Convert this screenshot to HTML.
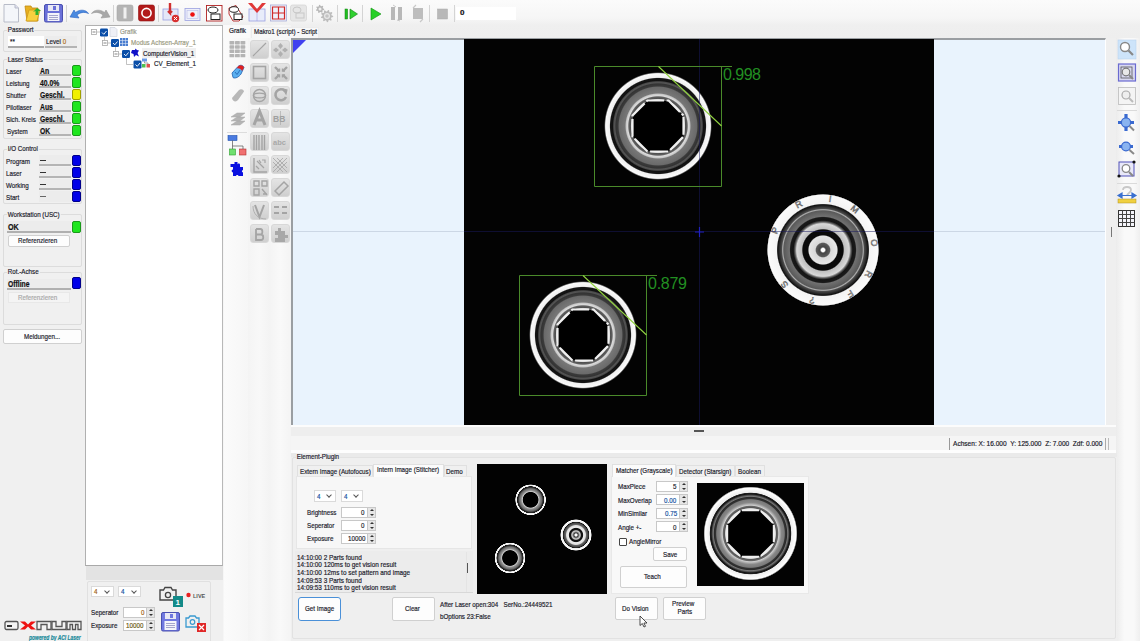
<!DOCTYPE html>
<html><head><meta charset="utf-8">
<style>
*{box-sizing:border-box}
html,body{margin:0;padding:0}
body{width:1140px;height:641px;overflow:hidden;position:relative;background:#f0f0f0;font-family:"Liberation Sans",sans-serif;color:#1c1c2c}
.a{position:absolute}
.t{position:absolute;white-space:nowrap;font-size:8px;line-height:8px;transform-origin:0 0;transform:scaleX(.78);-webkit-text-stroke:.2px currentColor}
.b{font-weight:bold;color:#111;font-size:8.5px;transform:scaleX(.8)}
#toolbar{left:0;top:0;width:1140px;height:38px;background:linear-gradient(#fbfbfb,#f6f6f6 18px,#efefef 25px,#eeeeee 37px)}
.sep{position:absolute;top:4px;width:1px;height:18px;background:#d6d6d6;border-right:1px solid #fff}
#tree{left:85px;top:25px;width:138px;height:541px;background:#fff;border:1px solid #b0b0b0;border-right:1px solid #b8b8b8;border-bottom:1px solid #a9a9a9}
#treebar{left:86px;top:566px;width:137px;height:14px;background:#e3e3e3}
#pal{left:223px;top:25px;width:68px;height:616px;background:#f6f6f6}
.pc{position:absolute;top:0;height:616px}
#canvas{left:291px;top:38px;width:815px;height:388px;background:#e9f3fd;border-top:2px solid #9a9ea2;border-left:2px solid #9a9ea2;border-right:1px solid #fff;border-bottom:1px solid #fff}
#img{left:464px;top:39px;width:470px;height:386px;background:#030303;overflow:hidden}
#rightbar{left:1116px;top:38px;width:24px;height:603px;background:linear-gradient(90deg,#ececec,#f9f9f9 35%,#f9f9f9 75%,#efefef)}
#status{left:291px;top:436px;width:825px;height:17px;background:#f5f5f5;border-bottom:3px solid #fdfdfd}
#plugin{left:291px;top:453px;width:826px;height:188px;background:#efefef;border-top:4px solid #eaeaea}
.grp{position:absolute;border:1px solid #dcdcdc;border-radius:2px}
.val{position:absolute;left:39px;width:32px;height:11px;background:#ececec;border-bottom:2px solid #b4b4b4}
.ind{position:absolute;left:72px;width:9px;height:11px;border-radius:2px;border:1px solid #1a9a1a;background:#1ee61e}
.ind.y{border-color:#a0a000;background:#f0f000}
.ind.bl{border-color:#00008a;background:#0000e8}
.btn{position:absolute;background:#fdfdfd;border:1px solid #d0d0d0;border-radius:2px}
.pb{position:absolute;width:19px;height:19px;border-radius:3px;background:linear-gradient(#e4e4e4,#cfcfcf);border:1px solid #d8d8d8}
.spin{position:absolute;height:11px;background:#fff;border:1px solid #c8c8c8}
.spin i{position:absolute;right:0;top:0;width:8px;height:100%;background:#e6e6e6;border-left:1px solid #c8c8c8}
.spin i:before{content:"";position:absolute;left:2px;top:1px;border:2px solid transparent;border-bottom:2px solid #333;border-top:0}
.spin i:after{content:"";position:absolute;left:2px;bottom:1px;border:2px solid transparent;border-top:2px solid #333;border-bottom:0}
.combo{position:absolute;height:12px;background:#fff;border:1px solid #dadada}
.combo:after{content:"";position:absolute;right:4px;top:2px;width:3px;height:3px;border-right:1px solid #555;border-bottom:1px solid #555;transform:rotate(45deg)}
.tab{position:absolute;height:12px;background:#f0f0f0;border:1px solid #e0e0e0;border-bottom:0}
.tab.sel{background:#fbfbfb;height:13px}
</style></head><body>
<!-- TOOLBAR -->
<div id="toolbar" class="a"></div>
<svg class="a" style="left:0;top:0" width="520" height="25" viewBox="0 0 520 25">
 <!-- new doc -->
 <path d="M4 4.5H15L18.5 8V22H4Z" fill="#f4f6fa" stroke="#b8bcc8"/>
 <path d="M15 4.5V8H18.5" fill="#dde" stroke="#b8bcc8"/>
 <!-- open folder -->
 <path d="M25 6H31L32 8H38V21H27Z" fill="#e8b020" stroke="#c08a10" stroke-width=".8"/>
 <path d="M29 10H40L37 21H26Z" fill="#f8d040" stroke="#d09a18" stroke-width=".8"/>
 <path d="M33 12L37 8L41 11H38.5V15H35.5V11Z" fill="#30b030"/>
 <!-- save -->
 <rect x="44.5" y="4.5" width="18" height="17.5" rx="1.5" fill="#6a70d8" stroke="#4a50b0"/>
 <rect x="48" y="5" width="11" height="6" fill="#e8e8f4"/>
 <rect x="53" y="6" width="3" height="4" fill="#6a70d8"/>
 <rect x="47.5" y="13" width="12" height="8" fill="#f4f4fa"/>
 <path d="M49 15.5H58M49 17.5H58M49 19.5H58" stroke="#9090c0" stroke-width=".8"/>
 <rect x="66" y="5" width="1" height="17" fill="#d4d4d4"/>
 <!-- undo -->
 <path d="M70 17L74 10L75.5 12.5C80 9 86 9.5 88.5 13.5C84 11.5 80 12.5 77 15L79 18Z" fill="#4a8ae0" stroke="#2a62c0" stroke-width=".6"/>
 <!-- redo -->
 <path d="M110 17L106 10L104.5 12.5C100 9 94 9.5 91.5 13.5C96 11.5 100 12.5 103 15L101 18Z" fill="#a8a8a8" stroke="#989898" stroke-width=".6"/>
 <rect x="113" y="5" width="1" height="17" fill="#d4d4d4"/>
 <!-- I button -->
 <rect x="117" y="5" width="16" height="16" rx="2" fill="#b4b4b4" stroke="#a8a8a8" stroke-width=".6"/>
 <rect x="123.5" y="7.5" width="3" height="11" fill="#f0f0f0"/>
 <!-- O button -->
 <rect x="138.5" y="5" width="16" height="16" rx="2" fill="#b21a1a" stroke="#901010" stroke-width=".6"/>
 <circle cx="146.5" cy="13" r="4.6" fill="none" stroke="#fff" stroke-width="1.6"/>
 <rect x="158" y="5" width="1" height="17" fill="#d4d4d4"/>
 <!-- arrow-down x -->
 <rect x="163" y="9" width="15" height="11" fill="#e4e8f8" stroke="#9aa0e0" stroke-width=".8"/>
 <path d="M170 3V13L168 11M170 13L172 11" stroke="#d03030" stroke-width="2.4" fill="none"/>
 <circle cx="175.5" cy="18.5" r="3.7" fill="#d83030"/>
 <path d="M174 17L177 20M177 17L174 20" stroke="#fff" stroke-width="1"/>
 <!-- red dot frame -->
 <rect x="185" y="8.5" width="15" height="12" fill="#eef0fa" stroke="#9aa0e0" stroke-width=".8"/>
 <rect x="187" y="10.5" width="11" height="8" fill="none" stroke="#b8bce8" stroke-width=".6"/>
 <circle cx="192.5" cy="14.5" r="2.3" fill="#ee1010"/>
 <!-- ellipse rect -->
 <rect x="206.5" y="5.5" width="15.5" height="15.5" fill="#fff" stroke="#b02020" stroke-width=".9"/>
 <ellipse cx="213" cy="10" rx="5" ry="3" fill="#fff" stroke="#222" stroke-width="1"/>
 <rect x="211" y="14" width="9" height="5.5" fill="#fff" stroke="#222" stroke-width="1"/>
 <!-- skew ellipse -->
 <path d="M229 8L236 5.5L243 17L239 21H233L229 14Z" fill="#fff" stroke="#b02020" stroke-width=".9"/>
 <ellipse cx="234" cy="9.5" rx="4.5" ry="2.8" fill="#fff" stroke="#222" stroke-width="1"/>
 <rect x="234" y="14" width="8" height="5.5" fill="#fff" stroke="#222" stroke-width="1"/>
 <!-- V arrows -->
 <rect x="249" y="9" width="16" height="12" fill="#e8ecfa" stroke="#9aa0e0" stroke-width=".8"/>
 <path d="M257 9V21" stroke="#9aa0e0" stroke-width=".6"/>
 <path d="M248 3L257 13L266 3L262 3L257 9L252 3Z" fill="#e03838"/>
 <!-- grid -->
 <rect x="270.5" y="5" width="16" height="16" fill="#eef0fa" stroke="#a8acd8" stroke-width=".8"/>
 <path d="M272.5 7H284.5V19H272.5ZM278.5 7V19M272.5 13H284.5" fill="none" stroke="#d02828" stroke-width="1.2"/>
 <!-- disabled -->
 <rect x="290.5" y="5" width="16" height="16" rx="2" fill="#e6e6e6" stroke="#d6d6d6" stroke-width=".8"/>
 <ellipse cx="297" cy="10" rx="4" ry="3" fill="none" stroke="#c8c8c8"/>
 <rect x="296" y="13" width="8" height="5" fill="none" stroke="#c8c8c8"/>
 <rect x="312" y="5" width="1" height="17" fill="#d4d4d4"/>
 <!-- gears -->
 <path d="M324.20 9.00L324.09 9.93L322.70 10.30L322.35 10.87L322.62 12.28L321.82 12.78L320.67 11.92L320.00 12.00L319.07 13.09L318.18 12.78L318.13 11.35L317.65 10.87L316.22 10.82L315.91 9.93L317.00 9.00L317.08 8.33L316.22 7.18L316.72 6.38L318.13 6.65L318.70 6.30L319.07 4.91L320.00 4.80L320.67 6.08L321.30 6.30L322.62 5.72L323.28 6.38L322.70 7.70L322.92 8.33Z" fill="#b8b8b8"/><circle cx="320" cy="9" r="1.5" fill="#f0f0f0"/>
 <path d="M333.20 16.00L333.11 17.08L331.32 17.57L330.98 18.30L331.75 19.99L330.99 20.75L329.30 19.98L328.57 20.32L328.08 22.11L327.00 22.20L326.20 20.53L325.43 20.32L323.90 21.37L323.01 20.75L323.48 18.96L323.02 18.30L321.17 18.12L320.89 17.08L322.40 16.00L322.47 15.20L321.17 13.88L321.63 12.90L323.48 13.04L324.04 12.48L323.90 10.63L324.88 10.17L326.20 11.47L327.00 11.40L328.08 9.89L329.12 10.17L329.30 12.02L329.96 12.48L331.75 12.01L332.37 12.90L331.32 14.43L331.53 15.20Z" fill="#bdbdbd"/><circle cx="327" cy="16" r="3" fill="#e8e8e8"/><circle cx="327" cy="16" r="1.8" fill="#c4c4c4"/>
 <rect x="337" y="5" width="1" height="17" fill="#d4d4d4"/>
 <!-- step -->
 <rect x="345" y="9" width="2.6" height="10" fill="#20c020" stroke="#108010" stroke-width=".5"/>
 <path d="M350 9L357.5 14L350 19Z" fill="#30d030" stroke="#108010" stroke-width=".6"/>
 <rect x="362" y="5" width="1" height="17" fill="#d4d4d4"/>
 <!-- play -->
 <path d="M371 8L381 14L371 20Z" fill="#28d028" stroke="#109010" stroke-width=".6"/>
 <!-- pause -->
 <rect x="391" y="7" width="4" height="13" fill="#b8b8b8"/>
 <rect x="398" y="7" width="4" height="13" fill="#b8b8b8"/>
 <path d="M393 5L396 7M400 21L397 20" stroke="#c8c8c8"/>
 <!-- stop/arrows -->
 <rect x="413" y="8" width="10" height="11" fill="#bdbdbd"/>
 <path d="M413 8L416 5M423 19L420 22" stroke="#c8c8c8" stroke-width="1.2"/>
 <rect x="429" y="5" width="1" height="17" fill="#d4d4d4"/>
 <rect x="437.5" y="9" width="10" height="10" fill="#b8b8b8" stroke="#aaa" stroke-width=".5"/>
 <rect x="454" y="5" width="1" height="17" fill="#d4d4d4"/>
 <rect x="456" y="7" width="60" height="13" fill="#fff"/>
</svg>
<div class="t b" style="left:460px;top:9px;font-size:8px;transform:none">0</div>

<!-- LEFT PANEL -->
<div id="left" class="a" style="left:0;top:25px;width:86px;height:616px;background:#f0f0f0"></div>
<!-- Passwort -->
<div class="grp" style="left:3px;top:30px;width:79px;height:22px"></div>
<div class="t" style="left:7px;top:26px;padding:0 1px;background:#f0f0f0">Passwort</div>
<div class="a" style="left:8px;top:36px;width:36px;height:12px;background:#fff;border-bottom:2px solid #a8a8a8"></div>
<div class="t" style="left:10px;top:38px">**</div>
<div class="a" style="left:45px;top:36px;width:32px;height:12px;background:#ececec;border-bottom:2px solid #b4b4b4"></div>
<div class="t" style="left:46px;top:38px">Level <span style="color:#b07020">0</span></div>
<!-- Laser Status -->
<div class="grp" style="left:3px;top:59px;width:79px;height:80px"></div>
<div class="t" style="left:7px;top:56px;padding:0 1px;background:#f0f0f0">Laser Status</div>
<div class="t" style="left:6px;top:68px">Laser</div><div class="val" style="top:65px"></div><div class="t b" style="left:40px;top:67px">An</div><div class="ind" style="top:65px"></div>
<div class="t" style="left:6px;top:80px">Leistung</div><div class="val" style="top:77px"></div><div class="t b" style="left:40px;top:79px">40.0%</div><div class="ind" style="top:77px"></div>
<div class="t" style="left:6px;top:92px">Shutter</div><div class="val" style="top:89px"></div><div class="t b" style="left:40px;top:91px">Geschl.</div><div class="ind y" style="top:89px"></div>
<div class="t" style="left:6px;top:104px">Pilotlaser</div><div class="val" style="top:101px"></div><div class="t b" style="left:40px;top:103px">Aus</div><div class="ind" style="top:101px"></div>
<div class="t" style="left:6px;top:116px">Sich. Kreis</div><div class="val" style="top:113px"></div><div class="t b" style="left:40px;top:115px">Geschl.</div><div class="ind" style="top:113px"></div>
<div class="t" style="left:7px;top:128px">System</div><div class="val" style="top:125px"></div><div class="t b" style="left:40px;top:127px">OK</div><div class="ind" style="top:125px"></div>
<!-- I/O Control -->
<div class="grp" style="left:3px;top:149px;width:79px;height:55px"></div>
<div class="t" style="left:7px;top:145px;padding:0 1px;background:#f0f0f0">I/O Control</div>
<div class="t" style="left:6px;top:158px">Program</div><div class="val" style="top:155px"></div><div class="a" style="left:40px;top:160px;width:6px;height:1px;background:#333"></div><div class="ind bl" style="top:155px"></div>
<div class="t" style="left:6px;top:170px">Laser</div><div class="val" style="top:167px"></div><div class="a" style="left:40px;top:172px;width:6px;height:1px;background:#333"></div><div class="ind bl" style="top:167px"></div>
<div class="t" style="left:6px;top:182px">Working</div><div class="val" style="top:179px"></div><div class="a" style="left:40px;top:184px;width:6px;height:1px;background:#333"></div><div class="ind bl" style="top:179px"></div>
<div class="t" style="left:6px;top:194px">Start</div><div class="val" style="top:191px;border-bottom:0"></div><div class="a" style="left:40px;top:196px;width:6px;height:1px;background:#666"></div><div class="ind bl" style="top:191px"></div>
<!-- Workstation -->
<div class="grp" style="left:3px;top:214px;width:79px;height:53px"></div>
<div class="t" style="left:7px;top:211px;padding:0 1px;background:#f0f0f0">Workstation (USC)</div>
<div class="a" style="left:7px;top:221px;width:64px;height:12px;background:#ececec;border-bottom:2px solid #b0b0b0"></div>
<div class="t b" style="left:8px;top:223px;font-size:8.5px;transform:scaleX(.85)">OK</div>
<div class="ind" style="top:221px;height:12px"></div>
<div class="btn" style="left:8px;top:235px;width:62px;height:12px"></div>
<div class="t" style="left:18px;top:237px">Referenzieren</div>
<!-- Rot.-Achse -->
<div class="grp" style="left:3px;top:272px;width:79px;height:53px"></div>
<div class="t" style="left:7px;top:268px;padding:0 1px;background:#f0f0f0">Rot.-Achse</div>
<div class="a" style="left:7px;top:279px;width:64px;height:11px;background:#ececec;border-bottom:2px solid #b0b0b0"></div>
<div class="t b" style="left:8px;top:280px;font-size:8.5px;transform:scaleX(.8)">Offline</div>
<div class="ind bl" style="top:277px;height:12px"></div>
<div class="a" style="left:8px;top:292px;width:62px;height:11px;background:#f4f4f4;border:1px solid #e8e8e8"></div>
<div class="t" style="left:18px;top:294px;color:#a8a8a8">Referenzieren</div>
<!-- Meldungen -->
<div class="btn" style="left:3px;top:329px;width:79px;height:15px"></div>
<div class="t" style="left:24px;top:333px">Meldungen...</div>
<!-- logo -->
<svg class="a" style="left:4px;top:620px" width="78" height="11" viewBox="0 0 78 11">
 <g fill="#f4f4f4" stroke="#555" stroke-width="1.3">
  <rect x="1" y="1.5" width="13" height="8" rx="1.5"/>
  <path d="M33 9.5V1.5H47V9.5H43V4.5H37V9.5Z"/>
  <path d="M48 1.5H52V6.5H58V1.5H62V9.5H48Z"/>
  <path d="M63 9.5V1.5H77V9.5H74V4.5H71.5V9.5H68.5V4.5H66V9.5Z"/>
 </g>
 <rect x="3" y="5" width="5" height="2" fill="#333"/>
 <path d="M16 1.5H21L24 4.5L27 1.5H32L27 5.5L32 9.5H27L24 6.5L21 9.5H16L21 5.5Z" fill="#ee1111"/>
</svg>
<div class="t" style="left:29px;top:634px;font-size:6.5px;font-style:italic;font-weight:bold;color:#1a8a9a;transform:scaleX(.76)">powered by ACI Laser</div>

<!-- TREE -->
<div id="tree" class="a"></div>
<div id="treebar" class="a"></div>
<svg class="a" style="left:86px;top:25px" width="136" height="50" viewBox="86 25 136 50">
 <g stroke="#a8a8a8" stroke-width=".7" fill="none">
  <path d="M96.5 32H100M104.5 36.5V40.5M107.5 43H111M115.5 47V51.5M118.5 54H122M126.5 58V64.5H133"/>
 </g>
 <g fill="#fff" stroke="#a8a8a8" stroke-width=".8">
  <rect x="91.5" y="29.5" width="5" height="5"/><rect x="102.5" y="40.5" width="5" height="5"/><rect x="113.5" y="51.5" width="5" height="5"/>
 </g>
 <path d="M92.5 32H95.5M103.5 43H106.5M114.5 54H117.5" stroke="#555" stroke-width=".7"/>
 <g fill="#0a4ea8">
  <rect x="100" y="28.5" width="8" height="8" rx="1.2"/><rect x="111" y="39" width="8" height="8" rx="1.2"/><rect x="122" y="50" width="8" height="8" rx="1.2"/><rect x="133.5" y="60.5" width="8" height="8" rx="1.2"/>
 </g>
 <path d="M102 32.5L103.8 34.3L106.5 31M113 43L114.8 44.8L117.5 41.5M124 54L125.8 55.8L128.5 52.5M135.5 64.5L137.3 66.3L140 63" stroke="#fff" stroke-width=".9" fill="none"/>
 <!-- doc icon -->
 <path d="M110 27.5H115L117 29.5V36.5H110Z" fill="#eef0f6" stroke="#c8ccd8" stroke-width=".6"/>
 <!-- grid icon -->
 <g fill="#4a7ed0"><rect x="120.0" y="38.0" width="2.4" height="2.4"/><rect x="120.0" y="40.8" width="2.4" height="2.4"/><rect x="120.0" y="43.6" width="2.4" height="2.4"/><rect x="122.8" y="38.0" width="2.4" height="2.4"/><rect x="122.8" y="40.8" width="2.4" height="2.4"/><rect x="122.8" y="43.6" width="2.4" height="2.4"/><rect x="125.6" y="38.0" width="2.4" height="2.4"/><rect x="125.6" y="40.8" width="2.4" height="2.4"/><rect x="125.6" y="43.6" width="2.4" height="2.4"/></g>
 <!-- puzzle small -->
 <path d="M132 50L135 50L135.5 48.5L137 50L139 50.5L137.5 53L139 56.5L136 55L134 57L133.5 54L131 53Z" fill="#1010c8"/>
 <!-- CV icon -->
 <rect x="142" y="58.5" width="5" height="3" fill="#6a9ae8"/>
 <rect x="142" y="64" width="3.5" height="3.5" fill="#50c050"/><rect x="146.5" y="64" width="3.5" height="3.5" fill="#e05050"/>
 <path d="M144.5 61.5V63M144.5 63H148V64" stroke="#555" stroke-width=".5" fill="none"/>
</svg>
<div class="a" style="left:142px;top:48px;width:54px;height:10px;background:#f0f0f0"></div>
<div class="t" style="left:120px;top:28px;color:#9a9a8a">Grafik</div>
<div class="t" style="left:131px;top:39px;color:#9a9a80">Modus Achsen-Array_1</div>
<div class="t" style="left:143px;top:50px;color:#1a1a2a">ComputerVision_1</div>
<div class="t" style="left:154px;top:60px;color:#1a1a2a">CV_Element_1</div>

<!-- bottom controls under tree -->
<div class="grp" style="left:87px;top:581px;width:124px;height:62px;border-color:#e0e0e0"></div>
<div class="combo" style="left:91px;top:586px;width:23px;height:11px"></div><div class="t" style="left:94px;top:588px;color:#a06010">4</div>
<div class="combo" style="left:118px;top:586px;width:23px;height:11px"></div><div class="t" style="left:121px;top:588px;color:#1050a0">4</div>
<div class="t" style="left:91px;top:609px">Seperator</div>
<div class="spin" style="left:123px;top:607px;width:32px"><i></i></div><div class="t" style="left:141px;top:609px;color:#a06010">0</div>
<div class="t" style="left:91px;top:622px">Exposure</div>
<div class="spin" style="left:123px;top:620px;width:32px"><i></i></div><div class="t" style="left:126px;top:622px;color:#6a5a10">10000</div>
<svg class="a" style="left:158px;top:584px" width="52" height="50" viewBox="158 584 52 50">
 <path d="M160 590H163.5L165 587.5H171L172.5 590H176V600H160Z" fill="none" stroke="#444" stroke-width="1.4"/>
 <circle cx="168" cy="595" r="2.6" fill="none" stroke="#444" stroke-width="1.3"/>
 <rect x="173" y="596" width="10" height="11" fill="#138a88"/>
 <text x="175.5" y="605" font-family="Liberation Sans" font-size="8" font-weight="bold" fill="#fff">1</text>
 <circle cx="188.5" cy="595" r="2.2" fill="#e82020"/>
 <text x="193" y="597.5" font-family="Liberation Sans" font-size="5.5" font-weight="bold" fill="#555">LIVE</text>
 <rect x="161.5" y="612.5" width="18" height="18.5" rx="1.5" fill="#7078e0" stroke="#4a50b0"/>
 <rect x="165" y="613" width="11" height="6" fill="#e8e8f4"/>
 <rect x="170" y="614" width="3" height="4" fill="#7078e0"/>
 <rect x="164.5" y="621" width="12" height="9" fill="#f4f4fa"/>
 <path d="M166 623.5H175M166 625.5H175M166 627.5H175" stroke="#9090c0" stroke-width=".8"/>
 <path d="M186 618H188.5L190 616H195L196.5 618H199V627H186Z" fill="none" stroke="#3a9ad0" stroke-width="1.3"/>
 <circle cx="192.5" cy="622" r="2.3" fill="none" stroke="#3a9ad0" stroke-width="1.2"/>
 <rect x="197" y="623" width="9" height="9" fill="#e02828"/>
 <path d="M199 625L204 630M204 625L199 630" stroke="#fff" stroke-width="1.2"/>
</svg>

<!-- PALETTE -->
<div id="pal" class="a">
 <div class="pc" style="left:1px;width:24px;background:linear-gradient(90deg,#fbfbfb,#f6f6f6)"></div>
 <div class="pc" style="left:25px;width:22px;background:linear-gradient(90deg,#f4f4f4,#f8f8f8,#f3f3f3)"></div>
 <div class="pc" style="left:47px;width:21px;background:linear-gradient(90deg,#f4f4f4,#f9f9f9,#f4f4f4)"></div>
</div>
<!-- tabs -->
<div class="a" style="left:223px;top:25px;width:27px;height:13px;background:#fafafa"></div>
<div class="t" style="left:229px;top:27px;transform:scaleX(.8)">Grafik</div>
<div class="a" style="left:251px;top:27px;width:68px;height:11px;background:#f7f7f7;border:1px solid #ececec;border-bottom:0"></div>
<div class="t" style="left:254px;top:28px;transform:scaleX(.78)">Makro1 (script) - Script</div>
<!-- palette buttons -->
<div class="a" style="left:250px;top:40px">
 <div class="pb" style="left:0;top:0"></div><div class="pb" style="left:21px;top:0"></div>
 <div class="pb" style="left:0;top:23px"></div><div class="pb" style="left:21px;top:23px"></div>
 <div class="pb" style="left:0;top:46px"></div><div class="pb" style="left:21px;top:46px"></div>
 <div class="pb" style="left:0;top:69px"></div><div class="pb" style="left:21px;top:69px"></div>
 <div class="pb" style="left:0;top:92px"></div><div class="pb" style="left:21px;top:92px"></div>
 <div class="pb" style="left:0;top:115px"></div><div class="pb" style="left:21px;top:115px"></div>
 <div class="pb" style="left:0;top:138px"></div><div class="pb" style="left:21px;top:138px"></div>
 <div class="pb" style="left:0;top:161px"></div><div class="pb" style="left:21px;top:161px"></div>
 <div class="pb" style="left:0;top:184px"></div><div class="pb" style="left:21px;top:184px"></div>
</div>
<svg class="a" style="left:223px;top:38px" width="68" height="210" viewBox="223 38 68 210">
 <g fill="none" stroke="#a4a4a4" stroke-width="1.1">
  <!-- col1 grid -->
  <g fill="#b4b4b4" stroke="none"><rect x="229.5" y="41.0" width="4.8" height="3.4" rx=".6"/><rect x="229.5" y="45.3" width="4.8" height="3.4" rx=".6"/><rect x="229.5" y="49.6" width="4.8" height="3.4" rx=".6"/><rect x="229.5" y="53.9" width="4.8" height="3.4" rx=".6"/><rect x="235.0" y="41.0" width="4.8" height="3.4" rx=".6"/><rect x="235.0" y="45.3" width="4.8" height="3.4" rx=".6"/><rect x="235.0" y="49.6" width="4.8" height="3.4" rx=".6"/><rect x="235.0" y="53.9" width="4.8" height="3.4" rx=".6"/><rect x="240.5" y="41.0" width="4.8" height="3.4" rx=".6"/><rect x="240.5" y="45.3" width="4.8" height="3.4" rx=".6"/><rect x="240.5" y="49.6" width="4.8" height="3.4" rx=".6"/><rect x="240.5" y="53.9" width="4.8" height="3.4" rx=".6"/></g>
  <!-- line -->
  <path d="M253 56L266 43"/>
  <!-- rect -->
  <rect x="253.5" y="66.5" width="12" height="12" stroke-width="1.6"/>
  <!-- sphere -->
  <ellipse cx="259.5" cy="95.5" rx="6" ry="6" stroke-width="1.5"/><ellipse cx="259.5" cy="95.5" rx="6" ry="2.4" stroke-width="1.3"/>
  <!-- A -->
  <path d="M254 125L259.5 111L265 125M256 120H263" stroke-width="3"/>
  <!-- barcode -->
  <path d="M254 135V150M256.5 135V150M259 135V150M262 135V150M264.5 135V150" stroke-width="1.4"/>
  <!-- datamatrix -->
  <path d="M254 158V172H267" stroke-width="1.4"/>
  <path d="M257 161L264 168M259 160L261 163M256 166L259 169M262 160H265V163" stroke-width="1.2"/>
  <!-- qr -->
  <path d="M254 181H259V186H254ZM262 181H267V186H262ZM254 189H259V195H254ZM262 189L267 195M263 194H267" stroke-width="1.4"/>
  <!-- V -->
  <path d="M255 205L259.5 217L264 205" stroke-width="2"/>
  <path d="M253 206C253 214 258 219 266 219" stroke-width=".8"/>
  <!-- B -->
  <path d="M256 229V240H261C264 240 264 234.5 261 234.5H256M256 229H260.5C263 229 263 234.5 260.5 234.5" stroke-width="1.8"/>
  <!-- move -->
  <path d="M280.5 43L283 46L280.5 49L278 46ZM280.5 51L283 54L280.5 57L278 54ZM276 47.5L279 50L276 52.5L273 50ZM285 47.5L288 50L285 52.5L282 50Z" fill="#b0b0b0" stroke="none"/>
  <!-- shrink -->
  <path d="M275 67L279 71M287 67L283 71M275 79L279 75M287 79L283 75" stroke-width="2.4"/><path d="M277 71H279.5V68.5M285 71H282.5V68.5M277 75H279.5V77.5M285 75H282.5V77.5" stroke-width="1.4"/>
  <!-- rotate -->
  <path d="M285 91A5.5 5.5 0 1 0 286 97" stroke-width="2.6"/>
  <path d="M283 89L287 90L286 94Z" fill="#a4a4a4"/>
  <!-- BB -->
  <text x="273" y="122" font-family="Liberation Sans" font-size="8.5" font-weight="bold" fill="#a0a0a0" stroke="none">BB</text>
  <path d="M280.5 111V125" stroke-width=".6"/>
  <!-- abc -->
  <text x="273" y="145" font-family="Liberation Sans" font-size="7.5" font-weight="bold" fill="#a8a8a8" stroke="none">abc</text>
  <!-- mesh -->
  <path d="M273 158L287 172M277 158L287 168M273 162L283 172M287 158L273 172M283 158L273 168M287 162L277 172" stroke-width=".8"/>
  <!-- bandage -->
  <path d="M275 191L284 182L288 186L279 195Z" stroke-width="1.5"/>
  <!-- arrows -->
  <path d="M274 207H279M282 207H287M274 213H279M282 213H287" stroke-width="1.8"/>
  <!-- puzzle -->
  <path d="M275 231H278V228H281V231H285V235H288V238H285V242H275V238H278V235H275Z" fill="#a8a8a8" stroke="none"/>
 </g>
 <!-- col1 colored -->
 <path d="M232 73L238 66.5C240 64.5 243 65 244 67.5L241 74C239 77 235 79 233 77.5Z" fill="#5ab0f0" stroke="#2060b0" stroke-width=".8"/>
 <path d="M238 66.5C240 64.5 243 65 244 67.5L242 71C241 69 239 68 236.5 68.5Z" fill="#e02020"/>
 <path d="M235 72L237 74.5L240 70" stroke="#2060b0" stroke-width=".8" fill="none"/>
 <path d="M232 98L239 90C240.5 88.5 243.5 89 244 91.5L238 100C236 102.5 232.5 101.5 232 98Z" fill="#b8b8b8"/>
 <path d="M231 117L237 113H245L240 117ZM231 121L237 117H245L240 121ZM231 125L237 121H245L240 125Z" fill="#b4b4b4" stroke="#a8a8a8" stroke-width=".5"/>
 <rect x="227" y="132" width="20" height="1" fill="#dcdcdc"/>
 <rect x="228" y="135.5" width="9" height="5" fill="#4a7ae0" stroke="#2050b0" stroke-width=".6"/>
 <rect x="229.5" y="149" width="6" height="6" fill="#70e070" stroke="#30a030" stroke-width=".6"/>
 <rect x="239.5" y="149" width="6.5" height="6" fill="#f07070" stroke="#b03030" stroke-width=".6"/>
 <path d="M232.5 140.5V146H243V149M232.5 146V149" stroke="#555" stroke-width=".7" fill="none"/>
 <path d="M234.5 162H237.5V164.5C237.5 163 240 163 240 164.5V167H243V170C241.5 170 241.5 172.5 243 172.5V176H238.5C238.5 174.5 236 174.5 236 176H233V172.5C231.5 172.5 231 169.5 233 169.5V167H230.5V164H234.5Z" fill="#0a10e0"/>
</svg>

<!-- CANVAS -->
<div id="canvas" class="a"></div>
<svg class="a" style="left:293px;top:40px" width="14" height="14"><path d="M0 0H13L0 13Z" fill="#4040f0"/></svg>
<div class="a" style="left:293px;top:231px;width:812px;height:1px;background:#ccd7e5"></div>
<div id="img" class="a">
<svg width="470" height="386" viewBox="464 39 470 386" style="display:block">
 <defs>
  <radialGradient id="ga" gradientUnits="userSpaceOnUse" cx="0" cy="0" r="54"><stop offset="0" stop-color="#000"/><stop offset="0.44" stop-color="#000"/><stop offset="0.455" stop-color="#eaeaea"/><stop offset="0.49" stop-color="#d8d8d8"/><stop offset="0.51" stop-color="#505050"/><stop offset="0.54" stop-color="#606060"/><stop offset="0.56" stop-color="#dcdcdc"/><stop offset="0.59" stop-color="#c8c8c8"/><stop offset="0.61" stop-color="#777"/><stop offset="0.72" stop-color="#6a6a6a"/><stop offset="0.74" stop-color="#3a3a3a"/><stop offset="0.78" stop-color="#333"/><stop offset="0.8" stop-color="#555"/><stop offset="0.82" stop-color="#4a4a4a"/><stop offset="0.84" stop-color="#111"/><stop offset="0.88" stop-color="#151515"/><stop offset="0.9" stop-color="#f0f0f0"/><stop offset="0.97" stop-color="#fafafa"/><stop offset="0.99" stop-color="#333"/><stop offset="1" stop-color="#000"/></radialGradient>
  <radialGradient id="gb" gradientUnits="userSpaceOnUse" cx="0" cy="0" r="56"><stop offset="0" stop-color="#fff"/><stop offset="0.03" stop-color="#fff"/><stop offset="0.055" stop-color="#444"/><stop offset="0.12" stop-color="#5a5a5a"/><stop offset="0.14" stop-color="#d8d8d8"/><stop offset="0.25" stop-color="#e6e6e6"/><stop offset="0.27" stop-color="#0a0a0a"/><stop offset="0.36" stop-color="#0a0a0a"/><stop offset="0.38" stop-color="#c0c0c0"/><stop offset="0.47" stop-color="#d8d8d8"/><stop offset="0.5" stop-color="#606060"/><stop offset="0.53" stop-color="#151515"/><stop offset="0.58" stop-color="#1a1a1a"/><stop offset="0.6" stop-color="#707070"/><stop offset="0.7" stop-color="#5a5a5a"/><stop offset="0.72" stop-color="#b0b0b0"/><stop offset="0.74" stop-color="#4a4a4a"/><stop offset="0.78" stop-color="#2a2a2a"/><stop offset="0.81" stop-color="#101010"/><stop offset="0.83" stop-color="#f4f4f4"/><stop offset="0.98" stop-color="#fafafa"/><stop offset="0.995" stop-color="#888"/><stop offset="1" stop-color="#000"/></radialGradient>
 </defs>
  <g transform="translate(658 126)"><circle r="54" fill="url(#ga)"/>
  <path d="M25.5 -10.56L25.5 10.56L10.56 25.5L-10.56 25.5L-25.5 10.56L-25.5 -10.56L-10.56 -25.5L10.56 -25.5Z" fill="#000" stroke="#f0f0f0" stroke-width="2.2" stroke-dasharray="18.16 2.5" stroke-dashoffset="-1.25"/></g>
 <g transform="translate(583 335)"><circle r="54" fill="url(#ga)"/>
  <path d="M25.5 -10.56L25.5 10.56L10.56 25.5L-10.56 25.5L-25.5 10.56L-25.5 -10.56L-10.56 -25.5L10.56 -25.5Z" fill="#000" stroke="#f0f0f0" stroke-width="2.2" stroke-dasharray="18.16 2.5" stroke-dashoffset="-1.25"/></g>
 <g transform="translate(823 250)"><circle r="56" fill="url(#gb)"/><circle r="1.5" fill="#fff"/><text x="0" y="0" transform="translate(-23.9 -45.0) rotate(-28)" font-family="Liberation Sans" font-size="9" text-anchor="middle" dominant-baseline="middle" fill="none" stroke="#666" stroke-width=".6">R</text><text x="0" y="0" transform="translate(7.1 -50.5) rotate(8)" font-family="Liberation Sans" font-size="9" text-anchor="middle" dominant-baseline="middle" fill="none" stroke="#666" stroke-width=".6">I</text><text x="0" y="0" transform="translate(31.4 -40.2) rotate(38)" font-family="Liberation Sans" font-size="9" text-anchor="middle" dominant-baseline="middle" fill="none" stroke="#666" stroke-width=".6">M</text><text x="0" y="0" transform="translate(50.5 -7.1) rotate(82)" font-family="Liberation Sans" font-size="9" text-anchor="middle" dominant-baseline="middle" fill="none" stroke="#666" stroke-width=".6">O</text><text x="0" y="0" transform="translate(45.0 23.9) rotate(118)" font-family="Liberation Sans" font-size="9" text-anchor="middle" dominant-baseline="middle" fill="none" stroke="#666" stroke-width=".6">R</text><text x="0" y="0" transform="translate(27.0 43.3) rotate(148)" font-family="Liberation Sans" font-size="9" text-anchor="middle" dominant-baseline="middle" fill="none" stroke="#666" stroke-width=".6">F</text><text x="0" y="0" transform="translate(-10.6 49.9) rotate(192)" font-family="Liberation Sans" font-size="9" text-anchor="middle" dominant-baseline="middle" fill="none" stroke="#666" stroke-width=".6">?</text><text x="0" y="0" transform="translate(-37.9 34.1) rotate(228)" font-family="Liberation Sans" font-size="9" text-anchor="middle" dominant-baseline="middle" fill="none" stroke="#666" stroke-width=".6">S</text><text x="0" y="0" transform="translate(-47.3 -19.1) rotate(-68)" font-family="Liberation Sans" font-size="9" text-anchor="middle" dominant-baseline="middle" fill="none" stroke="#666" stroke-width=".6">P</text></g>
 <path d="M464 231.5H934M699.5 39V425" stroke="#1a1a60" stroke-opacity=".5" stroke-width="1"/>
 <path d="M695 232H704M699.5 227V237" stroke="#2020c0" stroke-width="1.2"/>
 <g fill="none" stroke="#4a8a2a" stroke-width="1">
  <path d="M594.5 66.5H732M594.5 66.5V186.5H721.5V66.5"/>
  <path d="M519.5 275.5H657M519.5 275.5V395.5H646.5V275.5"/>
 </g>
 <path d="M658.5 66.5L721.5 126M583 275.5L646.5 335" stroke="#90d040" stroke-width="1.1"/>
 <text x="723" y="79.5" font-family="Liberation Sans" font-size="16" fill="#229022" textLength="38">0.998</text>
 <text x="648" y="289" font-family="Liberation Sans" font-size="16" fill="#229022" textLength="39">0.879</text>
</svg>
</div>

<!-- RIGHT BAR -->
<div id="rightbar" class="a"></div>
<div class="a" style="left:1106px;top:38px;width:10px;height:398px;background:#efefef"></div>
<div class="a" style="left:1111px;top:227px;width:1px;height:10px;background:#777"></div>
<svg class="a" style="left:1116px;top:36px" width="24" height="196" viewBox="1116 36 24 196">
 <!-- zoom 1 (selected) -->
 <rect x="1118" y="40" width="18" height="19" fill="#cde4fa" stroke="#b8d2ee" stroke-width=".6"/>
 <circle cx="1125" cy="47" r="4.5" fill="#fff" stroke="#888" stroke-width="1.4"/>
 <path d="M1128.5 50.5L1133 55" stroke="#888" stroke-width="2.2"/>
 <!-- zoom 2 -->
 <rect x="1118.5" y="64" width="17" height="17" fill="#d8d8f0" stroke="#6a6ad0" stroke-width="1.2"/>
 <rect x="1121" y="67" width="11" height="11" fill="none" stroke="#555" stroke-width=".8"/>
 <circle cx="1126" cy="72" r="3.8" fill="#e8e8e8" stroke="#777" stroke-width="1.2"/>
 <path d="M1129 75L1133 79" stroke="#888" stroke-width="2"/>
 <!-- zoom 3 disabled -->
 <rect x="1118.5" y="87.5" width="17" height="17" fill="#f4f4f4" stroke="#bbb" stroke-width=".8"/>
 <circle cx="1126" cy="95" r="4" fill="#eee" stroke="#aaa" stroke-width="1.2"/>
 <path d="M1129 98L1133 102" stroke="#bbb" stroke-width="2"/>
 <rect x="1117" y="110" width="20" height="1" fill="#dadada"/>
 <!-- zoom 4 -->
 <path d="M1126 114V131M1118 122.5H1134" stroke="#3a6ad0" stroke-width="3.2"/>
 <circle cx="1126" cy="122.5" r="4.6" fill="#8ab4f0" stroke="#3a6ad0" stroke-width="1.2"/>
 <path d="M1129.5 126L1134 130.5" stroke="#888" stroke-width="2"/>
 <!-- zoom 5 -->
 <path d="M1119 146.5H1133" stroke="#3a6ad0" stroke-width="3"/>
 <circle cx="1126" cy="146.5" r="4.4" fill="#8ab4f0" stroke="#3a6ad0" stroke-width="1.2"/>
 <path d="M1129.5 150L1134 154" stroke="#888" stroke-width="2"/>
 <!-- zoom 6 -->
 <rect x="1119" y="162" width="15" height="14" fill="#e8e8f8" stroke="#5050b8" stroke-width="1"/>
 <circle cx="1126" cy="168.5" r="3.8" fill="#fff" stroke="#888" stroke-width="1.3"/>
 <path d="M1129 172L1133 176" stroke="#888" stroke-width="2"/>
 <circle cx="1119" cy="176" r="1.6" fill="#111"/><circle cx="1134" cy="162" r="1.6" fill="#111"/>
 <rect x="1117" y="183" width="20" height="1" fill="#dadada"/>
 <!-- ? icon -->
 <path d="M1123 190C1123 186 1131 186 1131 190C1131 193 1127 193 1127 196" fill="none" stroke="#c8c8c8" stroke-width="1.8"/>
 <path d="M1118 195.5L1122 193V198ZM1136 195.5L1132 193V198ZM1122 195.5H1132" fill="#3a70d0" stroke="#3a70d0" stroke-width="1.2"/>
 <rect x="1118" y="199" width="18" height="4" fill="#f0d040" stroke="#b09020" stroke-width=".5"/>
 <!-- grid -->
 <rect x="1118.5" y="210.5" width="16" height="16" fill="#f4f4fa" stroke="#333"/>
 <path d="M1122.5 210.5V226.5M1126.5 210.5V226.5M1130.5 210.5V226.5M1118.5 214.5H1134.5M1118.5 218.5H1134.5M1118.5 222.5H1134.5" stroke="#444" stroke-width="1"/>
</svg>

<!-- SPLITTER / STATUS -->
<div class="a" style="left:291px;top:425px;width:825px;height:2px;background:#fcfcfc"></div>
<div class="a" style="left:291px;top:427px;width:825px;height:9px;background:#eeeeee"></div>
<div class="a" style="left:694px;top:430px;width:10px;height:2px;background:#555"></div>
<div id="status" class="a"></div>

<!-- PLUGIN -->
<div id="plugin" class="a"></div>
<div class="a" style="left:949px;top:438px;width:1px;height:12px;background:#999"></div>
<div class="t" style="left:953px;top:440px;font-size:8px;color:#1a1a2a;transform:scaleX(.82)">Achsen: X: 16.000&nbsp; Y: 125.000&nbsp; Z: 7.000&nbsp; Zdf: 0.000</div>
<div class="a" style="left:1105px;top:438px;width:1px;height:12px;background:#aaa"></div>
<div class="a" style="left:1108px;top:438px;width:1px;height:12px;background:#bbb"></div>

<div class="grp" style="left:292px;top:457px;width:824px;height:182px;border-color:#e2e2e2"></div>
<div class="t" style="left:296px;top:453px;padding:0 1px;background:#efefef">Element-Plugin</div>
<!-- left tab control -->
<div class="a" style="left:296px;top:476px;width:176px;height:73px;background:#f7f7f7;border:1px solid #e6e6e6"></div>
<div class="tab" style="left:297px;top:465px;width:76px;height:11px"></div>
<div class="t" style="left:300px;top:468px">Extern Image (Autofocus)</div>
<div class="tab sel" style="left:373px;top:464px;width:71px;height:13px"></div>
<div class="t" style="left:377px;top:466px">Intern Image (Stitcher)</div>
<div class="tab" style="left:444px;top:465px;width:23px;height:11px"></div>
<div class="t" style="left:446px;top:468px">Demo</div>
<div class="combo" style="left:314px;top:490px;width:22px"></div><div class="t" style="left:317px;top:493px;color:#1050a0">4</div>
<div class="combo" style="left:341px;top:490px;width:22px"></div><div class="t" style="left:344px;top:493px;color:#1050a0">4</div>
<div class="t" style="left:307px;top:509px">Brightness</div>
<div class="spin" style="left:341px;top:507px;width:35px"><i></i></div><div class="t" style="left:361px;top:509px">0</div>
<div class="t" style="left:307px;top:522px">Seperator</div>
<div class="spin" style="left:341px;top:520px;width:35px"><i></i></div><div class="t" style="left:361px;top:522px">0</div>
<div class="t" style="left:307px;top:535px">Exposure</div>
<div class="spin" style="left:341px;top:533px;width:35px"><i></i></div><div class="t" style="left:348px;top:535px">10000</div>
<!-- log -->
<div class="a" style="left:295px;top:551px;width:178px;height:42px;background:#ececec;border-bottom:1px solid #d8d8d8;overflow:hidden"></div>
<div class="a" style="left:466px;top:552px;width:1px;height:40px;background:#e4e4e4"></div>
<div class="a" style="left:467px;top:563px;width:1px;height:10px;background:#555"></div>
<div class="t" style="left:297px;top:553.5px;transform:scaleX(.8)">14:10:00 2 Parts found</div>
<div class="t" style="left:297px;top:561.2px;transform:scaleX(.8)">14:10:00 120ms to get vision result</div>
<div class="t" style="left:297px;top:569px;transform:scaleX(.8)">14:10:00 12ms to set pattern and image</div>
<div class="t" style="left:297px;top:576.6px;transform:scaleX(.8)">14:09:53 3 Parts found</div>
<div class="t" style="left:297px;top:584.4px;transform:scaleX(.8)">14:09:53 110ms to get vision result</div>
<!-- thumbnail -->
<svg class="a" style="left:477px;top:464px" width="130" height="130" viewBox="0 0 130 130">
 <rect width="130" height="130" fill="#020202"/>
 <defs>
  <radialGradient id="tA" cx=".5" cy=".5" r=".5"><stop offset="0" stop-color="#000"/><stop offset="0.48" stop-color="#000"/><stop offset="0.53" stop-color="#c8c8c8"/><stop offset="0.62" stop-color="#8a8a8a"/><stop offset="0.72" stop-color="#6a6a6a"/><stop offset="0.8" stop-color="#2a2a2a"/><stop offset="0.86" stop-color="#151515"/><stop offset="0.88" stop-color="#e8e8e8"/><stop offset="0.97" stop-color="#fff"/><stop offset="1" stop-color="#000"/></radialGradient>
  <radialGradient id="tB" cx=".5" cy=".5" r=".5"><stop offset="0" stop-color="#fff"/><stop offset="0.08" stop-color="#fff"/><stop offset="0.12" stop-color="#333"/><stop offset="0.2" stop-color="#888"/><stop offset="0.26" stop-color="#ddd"/><stop offset="0.34" stop-color="#111"/><stop offset="0.42" stop-color="#111"/><stop offset="0.48" stop-color="#eee"/><stop offset="0.6" stop-color="#ddd"/><stop offset="0.66" stop-color="#666"/><stop offset="0.76" stop-color="#444"/><stop offset="0.82" stop-color="#111"/><stop offset="0.85" stop-color="#eee"/><stop offset="0.97" stop-color="#fff"/><stop offset="1" stop-color="#000"/></radialGradient>
 </defs>
 <circle cx="53.6" cy="35.8" r="15.5" fill="url(#tA)"/>
 <circle cx="99" cy="71" r="15.8" fill="url(#tB)"/>
 <circle cx="33" cy="94" r="15.5" fill="url(#tA)"/>
</svg>
<!-- matcher tab control -->
<div class="a" style="left:611px;top:476px;width:198px;height:118px;background:#f8f8f8;border:1px solid #e8e8e8"></div>
<div class="tab sel" style="left:612px;top:464px;width:64px;height:13px"></div>
<div class="t" style="left:616px;top:467px">Matcher (Grayscale)</div>
<div class="tab" style="left:676px;top:465px;width:59px;height:11px"></div>
<div class="t" style="left:679px;top:468px">Detector (Starsign)</div>
<div class="tab" style="left:735px;top:465px;width:30px;height:11px"></div>
<div class="t" style="left:738px;top:468px">Boolean</div>
<div class="t" style="left:618px;top:483px">MaxPiece</div>
<div class="spin" style="left:656px;top:481px;width:32px"><i></i></div><div class="t" style="left:673px;top:483px">5</div>
<div class="t" style="left:618px;top:497px">MaxOverlap</div>
<div class="spin" style="left:656px;top:494px;width:32px"><i></i></div><div class="t" style="left:664px;top:497px;color:#1050a0">0.00</div>
<div class="t" style="left:618px;top:510px">MinSimilar</div>
<div class="spin" style="left:656px;top:508px;width:32px"><i></i></div><div class="t" style="left:665px;top:510px;color:#1050a0">0.75</div>
<div class="t" style="left:618px;top:524px">Angle +-</div>
<div class="spin" style="left:656px;top:521px;width:32px"><i></i></div><div class="t" style="left:673px;top:524px">0</div>
<div class="a" style="left:619px;top:538px;width:8px;height:8px;background:#fff;border:1px solid #444;border-radius:1px"></div>
<div class="t" style="left:629px;top:538px">AngleMirror</div>
<div class="btn" style="left:653px;top:547px;width:34px;height:14px"></div>
<div class="t" style="left:663px;top:551px">Save</div>
<div class="btn" style="left:620px;top:566px;width:67px;height:22px"></div>
<div class="t" style="left:644px;top:573px">Teach</div>
<svg class="a" style="left:697px;top:483px" width="107" height="103" viewBox="0 0 107 103">
 <defs>
  <radialGradient id="pA" gradientUnits="userSpaceOnUse" cx="53.5" cy="50.5" r="47"><stop offset="0" stop-color="#000"/><stop offset="0.47" stop-color="#000"/><stop offset="0.49" stop-color="#f0f0f0"/><stop offset="0.53" stop-color="#e0e0e0"/><stop offset="0.55" stop-color="#555"/><stop offset="0.58" stop-color="#666"/><stop offset="0.6" stop-color="#ccc"/><stop offset="0.63" stop-color="#aaa"/><stop offset="0.66" stop-color="#888"/><stop offset="0.72" stop-color="#7a7a7a"/><stop offset="0.74" stop-color="#333"/><stop offset="0.77" stop-color="#2a2a2a"/><stop offset="0.79" stop-color="#777"/><stop offset="0.81" stop-color="#555"/><stop offset="0.84" stop-color="#111"/><stop offset="0.86" stop-color="#222"/><stop offset="0.875" stop-color="#eee"/><stop offset="0.97" stop-color="#fff"/><stop offset="0.99" stop-color="#666"/><stop offset="1" stop-color="#000"/></radialGradient>
 </defs>
 <rect width="107" height="103" fill="#030303"/>
 <circle cx="53.5" cy="50.5" r="47" fill="url(#pA)"/>
 <g transform="translate(53.5 50.5)"><path d="M23.2 -9.61L23.2 9.61L9.61 23.2L-9.61 23.2L-23.2 9.61L-23.2 -9.61L-9.61 -23.2L9.61 -23.2Z" fill="#000" stroke="#f0f0f0" stroke-width="1.8" stroke-dasharray="17.22 2" stroke-dashoffset="-1"/></g>
</svg>
<!-- bottom buttons -->
<div class="btn" style="left:298px;top:597px;width:43px;height:24px;border:1px solid #4a90d8;border-radius:3px"></div>
<div class="t" style="left:305px;top:605px">Get Image</div>
<div class="btn" style="left:392px;top:597px;width:43px;height:24px"></div>
<div class="t" style="left:405px;top:605px">Clear</div>
<div class="t" style="left:440px;top:601px">After Laser open:304&nbsp;&nbsp; SerNo.:24449521</div>
<div class="t" style="left:440px;top:613px">bOptions 23:False</div>
<div class="btn" style="left:615px;top:597px;width:43px;height:23px"></div>
<div class="t" style="left:622px;top:605px">Do Vision</div>
<div class="btn" style="left:663px;top:597px;width:43px;height:23px"></div>
<div class="t" style="left:672px;top:600px;line-height:7.5px;text-align:center">Preview<br>&nbsp;&nbsp;Parts</div>
<svg class="a" style="left:639px;top:615px" width="10" height="13" viewBox="0 0 10 13"><path d="M1 1V10.5L3.3 8.5L5 12L6.5 11.3L4.9 8H8Z" fill="#fff" stroke="#222" stroke-width=".8"/></svg>
</body></html>
